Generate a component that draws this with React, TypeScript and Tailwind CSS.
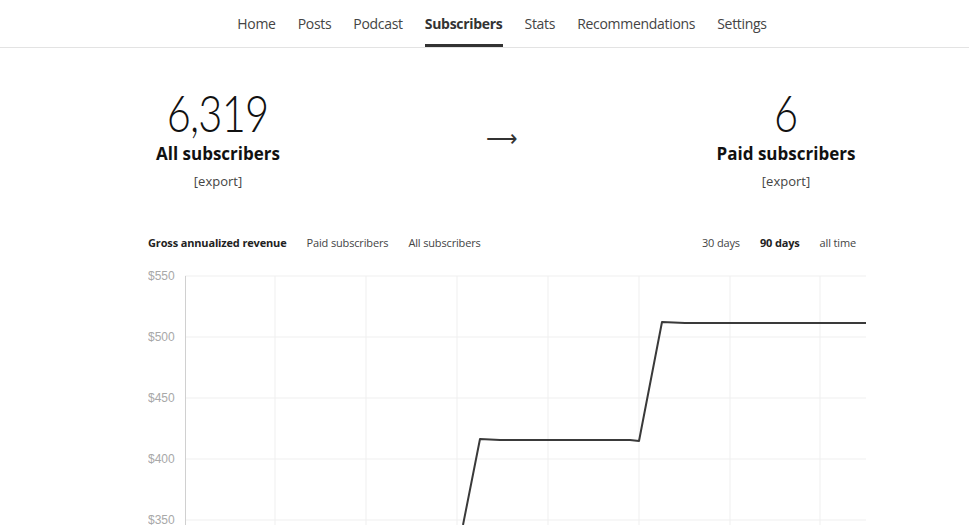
import React from 'react';

const navItems = ['Home', 'Posts', 'Podcast', 'Subscribers', 'Stats', 'Recommendations', 'Settings'];

const yLabels = [
  { label: '$550', y: 11 },
  { label: '$500', y: 72 },
  { label: '$450', y: 133 },
  { label: '$400', y: 194 },
  { label: '$350', y: 255 },
  { label: '$300', y: 316 },
];

const xGrid = [127, 218, 309, 400, 491, 582, 672];

// chart origin: page x 148, page y 265
const linePoints = '315,260 332,174 352,175 482,175 491,176 514,57 537,58 718,58';

const Chart: React.FC = () => (
  <svg width="718" height="330" className="block" style={{ fontFamily: '"Liberation Sans", Arial, sans-serif' }}>
    {yLabels.map((t) => (
      <g key={t.label}>
        <line x1="37" x2="718" y1={t.y} y2={t.y} stroke="#efefef" strokeWidth="1" />
        <text x="0" y={t.y + 4} fontSize="12" fill="#a8a8a8">
          {t.label}
        </text>
      </g>
    ))}
    {xGrid.map((x) => (
      <line key={x} x1={x} x2={x} y1="11" y2="330" stroke="#efefef" strokeWidth="1" />
    ))}
    <line x1="37.5" x2="37.5" y1="11" y2="330" stroke="#d0d0d0" strokeWidth="1" />
    <polyline points={linePoints} fill="none" stroke="#3a3a3a" strokeWidth="2" strokeLinejoin="round" />
  </svg>
);

const Stat: React.FC<{ value: string; label: string }> = ({ value, label }) => (
  <div className="w-[140px] flex flex-col items-center">
    <div
      className="text-[52px] leading-[60px] font-light text-[#111] tracking-[-1px] scale-x-[0.8]"
      style={{ fontFamily: 'Lato, sans-serif' }}
    >
      {value}
    </div>
    <div className="text-[17px] font-bold leading-[24px] text-[#111] whitespace-nowrap">{label}</div>
    <div className="text-[13px] text-[#444] mt-[6px]">[export]</div>
  </div>
);

export default function App() {
  return (
    <div className="h-[525px] overflow-hidden bg-white text-[#222]" style={{ fontFamily: '"Open Sans", "Noto Sans", sans-serif' }}>
      <nav className="border-b border-[#e3e3e3]">
        <div className="ml-[148px] w-[708px] flex justify-center gap-[22px] h-[47px] items-stretch">
          {navItems.map((item) => (
            <div
              key={item}
              className={
                'flex items-center text-[14px] tracking-[-0.3px] border-b-[3px] pt-[3px] ' +
                (item === 'Subscribers' ? 'font-bold text-[#333] border-[#333]' : 'text-[#444] border-transparent')
              }
            >
              {item}
            </div>
          ))}
        </div>
      </nav>

      <div className="ml-[148px] w-[708px]">
        <div className="flex justify-between items-start pt-[34px]">
          <Stat value="6,319" label="All subscribers" />
          <div className="pt-[44px] text-[22px] text-[#333] leading-none">⟶</div>
          <Stat value="6" label="Paid subscribers" />
        </div>

        <div className="flex justify-between items-center mt-[43px] text-[11px] tracking-[-0.15px] text-[#444]">
          <div className="flex gap-[20px]">
            <span className="font-bold text-[#222]">Gross annualized revenue</span>
            <span>Paid subscribers</span>
            <span>All subscribers</span>
          </div>
          <div className="flex gap-[20px]">
            <span>30 days</span>
            <span className="font-bold text-[#222]">90 days</span>
            <span>all time</span>
          </div>
        </div>

        <div className="mt-[14px]">
          <Chart />
        </div>
      </div>
    </div>
  );
}
